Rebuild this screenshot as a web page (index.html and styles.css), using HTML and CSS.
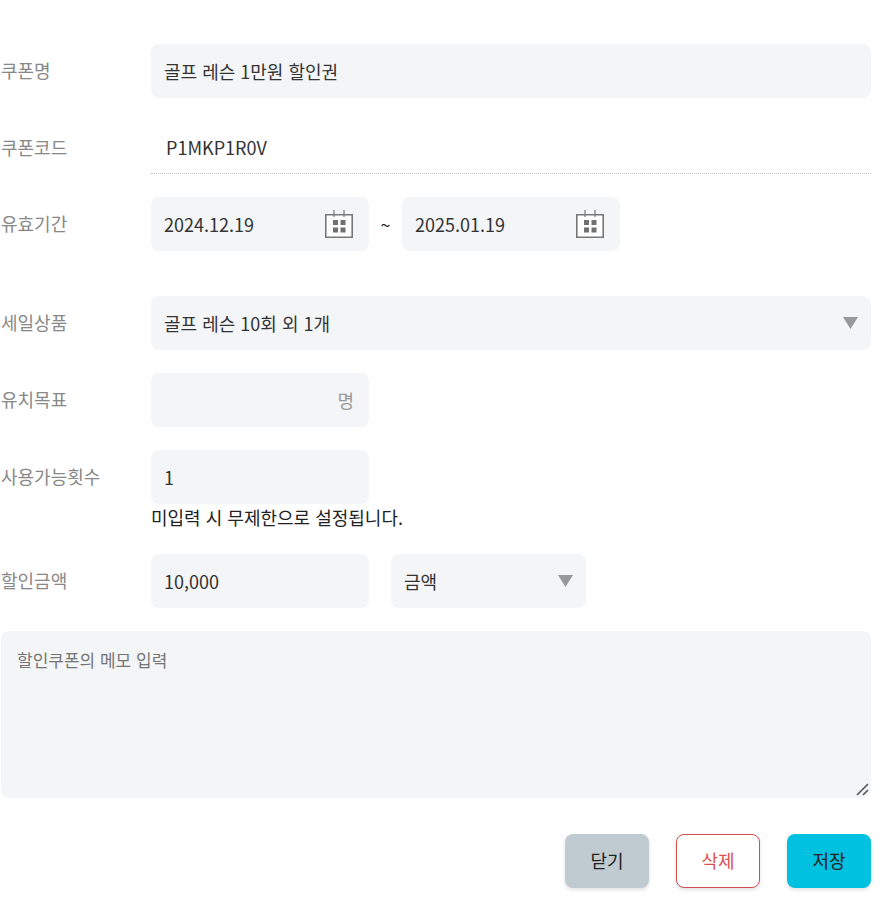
FILE: index.html
```html
<!DOCTYPE html>
<html lang="ko">
<head>
  <meta charset="UTF-8" />
  <meta name="viewport" content="width=device-width, initial-scale=1.0"/>
  <title>할인쿠폰</title>
  <link rel="stylesheet" href="styles.css">
</head>
<body>

  <form class="coupon-form">
    <div class="row">
      <label for="coupon-name">쿠폰명</label>
      <input type="text" id="coupon-name" class="field" value="골프 레슨 1만원 할인권">
    </div>

    <div class="row">
      <label for="coupon-code">쿠폰코드</label>
      <input type="text" id="coupon-code" class="code" value="P1MKP1R0V" readonly>
    </div>

    <!-- 유효기간 -->
    <div class="row row-period">
      <label for="start-date">유효기간</label>
      <div class="period">
        <div class="box short">
          <input type="text" id="start-date" class="field" value="2024.12.19">
          <button type="button" class="calendar-btn" aria-label="시작일 선택">
            <svg width="28" height="28" viewBox="0 0 28 28">
              <path d="M.8 4.8H27.2V27.2H.8Z" fill="#fff" stroke="#777" stroke-width="1.6"/>
              <path d="M9 0V7M19 0V7" stroke="#777" stroke-width="1.2"/>
              <path d="M8 10h5v5H8zM15.5 10h5v5h-5zM8 17.5h5v5H8zM15.5 17.5h5v5h-5z" fill="#707070"/>
            </svg>
          </button>
        </div>
        <span class="tilde">~</span>
        <div class="box short">
          <input type="text" id="end-date" class="field" value="2025.01.19" aria-label="종료일">
          <button type="button" class="calendar-btn" aria-label="종료일 선택">
            <svg width="28" height="28" viewBox="0 0 28 28">
              <path d="M.8 4.8H27.2V27.2H.8Z" fill="#fff" stroke="#777" stroke-width="1.6"/>
              <path d="M9 0V7M19 0V7" stroke="#777" stroke-width="1.2"/>
              <path d="M8 10h5v5H8zM15.5 10h5v5h-5zM8 17.5h5v5H8zM15.5 17.5h5v5h-5z" fill="#707070"/>
            </svg>
          </button>
        </div>
      </div>
    </div>

    <div class="row">
      <label for="product">세일상품</label>
      <div class="box">
        <select id="product" class="field">
          <option>골프 레슨 10회 외 1개</option>
        </select>
        <svg class="arrow" width="15" height="12" viewBox="0 0 15 12"><path d="M0 0H15L7.5 12Z" fill="#999"/></svg>
      </div>
    </div>

    <div class="row">
      <label for="goal">유치목표</label>
      <div class="box short">
        <input type="text" id="goal" class="field">
        <span class="unit">명</span>
      </div>
    </div>

    <div class="row">
      <label for="use-count">사용가능횟수</label>
      <div>
        <input type="text" id="use-count" class="field short" value="1">
        <p class="hint">미입력 시 무제한으로 설정됩니다.</p>
      </div>
    </div>

    <!-- 할인금액 -->
    <div class="row">
      <label for="amount">할인금액</label>
      <div class="discount">
        <input type="text" id="amount" class="field short" value="10,000">
        <div class="box type">
          <select id="discount-type" class="field" aria-label="할인 종류">
            <option>금액</option>
            <option>비율</option>
          </select>
          <svg class="arrow" width="15" height="12" viewBox="0 0 15 12"><path d="M0 0H15L7.5 12Z" fill="#999"/></svg>
        </div>
      </div>
    </div>

    <textarea class="memo" placeholder="할인쿠폰의 메모 입력" aria-label="메모"></textarea>

    <div class="buttons">
      <button type="button" class="btn close">닫기</button>
      <button type="button" class="btn delete">삭제</button>
      <button type="submit" class="btn save">저장</button>
    </div>
  </form>

</body>
</html>
```

FILE: styles.css
```css
* {
  box-sizing: border-box;
  margin: 0;
  padding: 0;
}
body {
  background: #fff;
  color: #222;
  font-family: "Noto Sans CJK KR", sans-serif;
  font-size: 18px;
}
input, select, textarea, button {
  font: inherit;
  color: #333;
  border: none;
}

.coupon-form {
  display: flex;
  flex-direction: column;
  gap: 23px;
  padding: 44px 22px 12px 1px;
}

/* === ROWS === */
.row {
  display: grid;
  grid-template-columns: 150px 1fr;
}
.row label {
  line-height: 53px;
  color: #888;
}
.row-period {
  margin-bottom: 22px;
}

/* === FIELDS === */
.field {
  display: block;
  width: 100%;
  height: 54px;
  padding: 0 13px;
  border-radius: 8px;
  background: #f4f5f7;
  appearance: none;
}
.short {
  width: 218px;
}
.code {
  height: 53px;
  padding: 0 15px;
  border-bottom: 1px dotted #bbb;
  background: none;
}

/* icon or unit over the right end of a field */
.box {
  display: grid;
  align-items: center;
}
.box > * {
  grid-area: 1 / 1;
}
.calendar-btn {
  justify-self: end;
  width: 28px;
  height: 28px;
  margin-right: 16px;
  background: none;
  cursor: pointer;
}
.calendar-btn svg {
  display: block;
}
.arrow {
  justify-self: end;
  margin-right: 13px;
  pointer-events: none;
}
.unit {
  justify-self: end;
  margin-right: 15px;
  color: #999;
}

.period,
.discount {
  display: flex;
  align-items: center;
}
.tilde {
  width: 33px;
  text-align: center;
}
.discount {
  gap: 22px;
}
.type {
  width: 195px;
}
.hint {
  line-height: 27px;
}

.memo {
  display: block;
  width: 100%;
  height: 167px;
  padding: 16px;
  border-radius: 8px;
  background: #f4f5f7;
  font-size: 17px;
  resize: vertical;
}
.memo::placeholder {
  color: #757575;
}
.memo::-webkit-resizer {
  background: url("data:image/svg+xml,%3Csvg xmlns='http://www.w3.org/2000/svg' width='15' height='15'%3E%3Cpath d='M1 12L12 1M7 12L12 7' stroke='%23555' stroke-width='1.6'/%3E%3C/svg%3E") no-repeat;
}

/* === BUTTONS === */
.buttons {
  display: flex;
  justify-content: flex-end;
  gap: 27px;
  margin-top: 13px;
}
.btn {
  width: 84px;
  height: 54px;
  padding-bottom: 2px;
  border-radius: 8px;
  box-shadow: 0 2px 4px rgba(0,0,0,0.12);
  color: #222;
  cursor: pointer;
}
.close {
  background: #bfcbd0;
}
.delete {
  border: 1px solid #d05050;
  background: #fff;
  color: #e05050;
}
.save {
  background: #00c1df;
}
```
